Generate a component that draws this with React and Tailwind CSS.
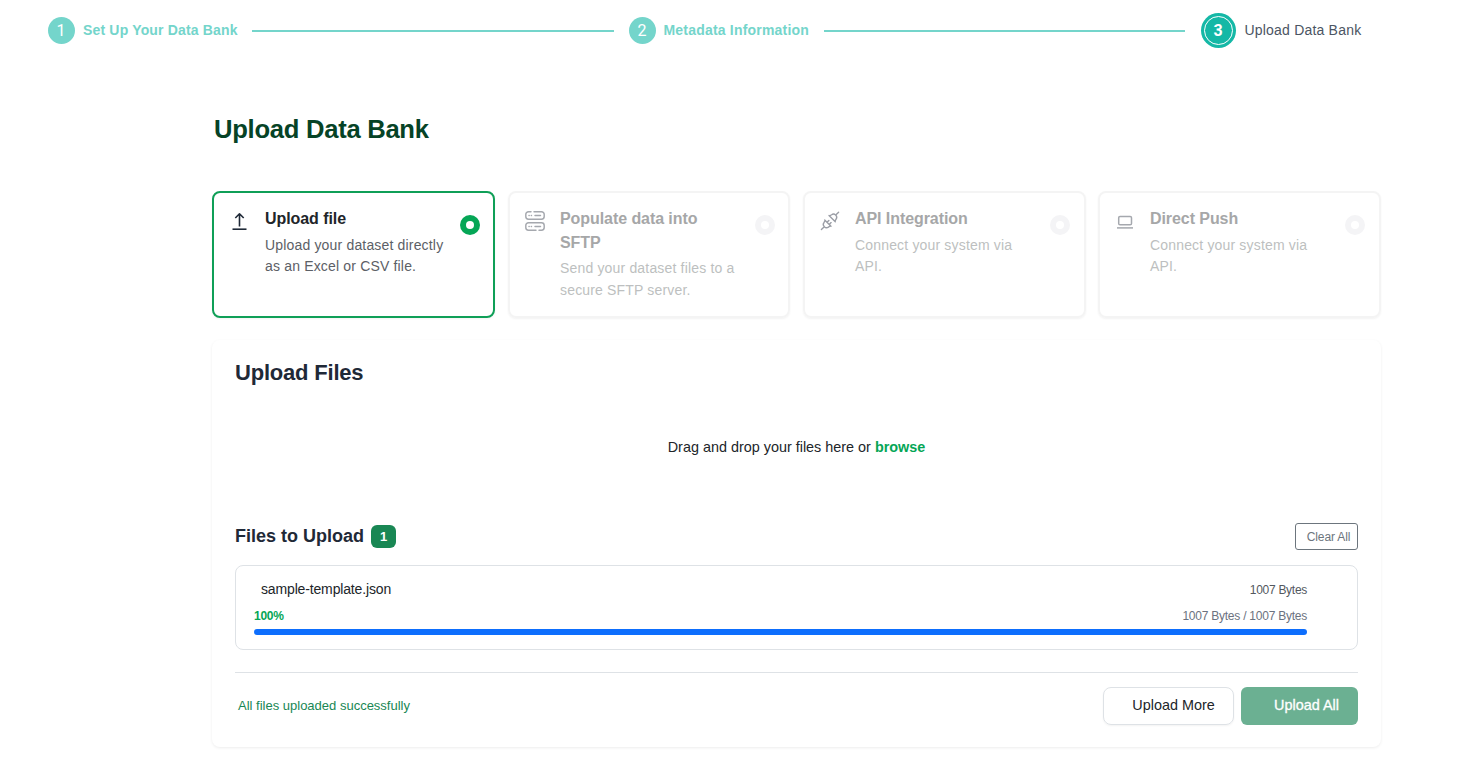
import React from "react";

function UploadIcon() {
  return (
    <svg width="20" height="20" viewBox="0 0 20 20" fill="none" stroke="#1f2937" strokeWidth="1.6">
      <path d="M10.500 15.500V3.200M6.300 7l4.200-4.200L14.700 7" strokeLinejoin="round" />
      <path d="M3.500 18.200h14" />
    </svg>
  );
}

function ServerIcon() {
  return (
    <svg width="20" height="20" viewBox="0 0 20 20" fill="none" stroke="#a5a8ae" strokeWidth="1.450" strokeLinecap="round">
      <path d="M6 .8H3.500A2.700 2.700 0 0 0 .8 3.500v2A2.700 2.700 0 0 0 3.500 8.200h13a2.700 2.700 0 0 0 2.700-2.700v-2A2.700 2.700 0 0 0 16.500 .8H9" />
      <path d="M11 19.200H3.500a2.700 2.700 0 0 1-2.700-2.700v-2a2.700 2.700 0 0 1 2.700-2.700h13a2.700 2.700 0 0 1 2.700 2.700v2a2.700 2.700 0 0 1-2.700 2.700H14" />
      <path d="M4 4.500h.2M6.300 4.500h.2M10 4.500h5.500M4 15.500h.2M6.300 15.500h.2M10 15.500h5.500" />
    </svg>
  );
}

function PlugIcon() {
  return (
    <svg width="20" height="20" viewBox="0 0 20 20" fill="none" stroke="#9a9da5" strokeWidth="1.350" strokeLinecap="round" strokeLinejoin="round">
      <path d="M4.700 9l6.300 6.300M5.200 9.500L3.900 11.600a3.200 3.200 0 0 0 .4 4.100a3.200 3.200 0 0 0 4.100.4l2.100-1.300M3.500 16.500L1.400 18.600M7.500 10.800l1.400-1.400M9.700 13l1.400-1.400" />
      <path d="M9 4.700l6.300 6.300M9.500 5.200l2.100-1.300a3.200 3.200 0 0 1 4.100.4a3.200 3.200 0 0 1 .4 4.100l-1.300 2.100M16.500 3.500L18.600 1.400" transform="translate(0 -.2)" />
    </svg>
  );
}

function LaptopIcon() {
  return (
    <svg width="20" height="20" viewBox="0 0 20 20" fill="none" stroke="#a5a8ae" strokeWidth="1.500">
      <rect x="3.700" y="5.400" width="12.800" height="8.400" rx="1.300" />
      <path d="M2 16.900h16" />
    </svg>
  );
}

function DoneStep({ number, label, labelClass }) {
  return (
    <div className="flex items-center">
      <span className="flex h-[27px] w-[27px] items-center justify-center rounded-full bg-[#74d5cb] font-['Roboto','Liberation_Sans',sans-serif] text-base text-white">
        {number}
      </span>
      <span className={`mb-px whitespace-nowrap font-bold text-[#74d5cb] ${labelClass}`}>{label}</span>
    </div>
  );
}

function MethodCard({ icon, title, text, active, className = "" }) {
  return (
    <div
      className={`flex h-[127px] rounded-lg border-2 pt-[13px] pl-[15px] shadow-xs ${
        active ? "border-[#0f9f57]" : "border-[#f4f4f4]"
      } ${className}`}
    >
      <div className={`shrink-0 pt-[5px] ${active ? "w-9" : "w-[35px]"}`}>{icon}</div>
      <div className="w-[188px] shrink-0 pt-px">
        <h3 className={`text-base leading-[23.500px] font-bold tracking-[-0.070px] whitespace-pre-line ${active ? "text-[#212529]" : "text-[#a6a7a8]"}`}>
          {title}
        </h3>
        <p className={`mt-[4.400px] text-sm leading-[21.400px] tracking-[0.170px] whitespace-pre-line ${active ? "text-[#5c6066]" : "text-[#bdbfc0]"}`}>
          {text}
        </p>
      </div>
      <span
        className={`mt-[9px] ml-[7px] flex h-5 w-5 shrink-0 items-center justify-center rounded-full ${
          active ? "bg-[#05a656]" : "bg-[#f4f4f6]"
        }`}
      >
        <span className="h-2 w-2 rounded-full bg-white" />
      </span>
    </div>
  );
}

export default function App() {
  return (
    <div className="h-[767px] w-[1468px] overflow-hidden bg-white font-['Liberation_Sans',Arial,sans-serif] text-[#212529]">
      <div className="flex h-[61px] items-center pl-[47.500px]">
        <DoneStep number="1" label="Set Up Your Data Bank" labelClass="ml-[8.500px] w-[168.500px] text-sm tracking-[0.170px]" />
        <div className="mt-px h-[2px] w-[362px] bg-[#74d5cb]" />
        <div className="w-[15px]" />
        <DoneStep number="2" label="Metadata Information" labelClass="ml-2 w-[160px] text-sm tracking-[0.200px]" />
        <div className="mt-px h-[2px] w-[361px] bg-[#74d5cb]" />
        <span className="ml-4 flex h-[35px] w-[35px] items-center justify-center rounded-full bg-[#14b8a6]">
          <span className="flex h-[29px] w-[29px] items-center justify-center rounded-full border border-white font-['Roboto','Liberation_Sans',sans-serif] text-base font-bold text-white">
            3
          </span>
        </span>
        <span className="mb-px ml-[9px] text-sm tracking-[0.200px] whitespace-nowrap text-[#4b5563]">Upload Data Bank</span>
      </div>

      <main className="ml-[212px] w-[1169px]">
        <h1 className="h-[130px] pt-[53px] pl-[2px] text-[25.600px] leading-[30px] font-bold tracking-[-0.270px] text-[#064326]">Upload Data Bank</h1>

        <div className="flex">
          <MethodCard className="mr-[13px] w-[283px]" active icon={<UploadIcon />} title="Upload file" text={"Upload your dataset directly\nas an Excel or CSV file."} />
          <MethodCard className="mr-[13px] w-[282px]" icon={<ServerIcon />} title={"Populate data into\nSFTP"} text={"Send your dataset files to a\nsecure SFTP server."} />
          <MethodCard className="mr-3 w-[283px]" icon={<PlugIcon />} title="API Integration" text={"Connect your system via\nAPI."} />
          <MethodCard className="w-[283px]" icon={<LaptopIcon />} title="Direct Push" text={"Connect your system via\nAPI."} />
        </div>

        <section className="mt-[22px] h-[407px] rounded-lg px-[23px] pt-[19px] shadow-[0_1px_3px_rgba(0,0,0,0.075)]">
          <h2 className="h-[59px] text-[22px] leading-7 font-bold tracking-[-0.200px] text-[#1f2937]">Upload Files</h2>
          <p className="h-[105px] pt-[19px] text-center text-[14.400px] leading-5 text-[#212529]">
            Drag and drop your files here or <span className="font-bold text-[#05a656]">browse</span>
          </p>

          <div className="flex h-[27px] items-center justify-between">
            <div className="flex items-center gap-[7px]">
              <h3 className="mb-[2px] text-[18px] leading-6 font-bold text-[#1f2937]">Files to Upload</h3>
              <span className="flex h-[23px] w-[25px] items-center justify-center rounded-md bg-[#198754] text-[13px] font-bold text-white">1</span>
            </div>
            <button className="h-[27px] w-[63px] rounded-[3px] border border-[#6c757d] pl-1 text-xs tracking-[-0.150px] whitespace-nowrap text-[#6c757d]">
              Clear All
            </button>
          </div>

          <div className="mt-[15px] h-[85px] rounded-lg border border-[#dee2e6] pt-[13px] pr-[50px] pl-[18px]">
            <div className="flex h-5 items-center justify-between">
              <span className="pl-[7px] text-sm tracking-[-0.150px] text-[#212529]">sample-template.json</span>
              <span className="pt-px text-xs tracking-[-0.280px] text-[#53585e]">1007 Bytes</span>
            </div>
            <div className="mt-2 flex h-[18px] items-center justify-between text-xs tracking-[-0.240px]">
              <span className="font-bold text-[#05a656]">100%</span>
              <span className="text-[#6b7280]">1007 Bytes / 1007 Bytes</span>
            </div>
            <div className="mt-1 h-1.5 rounded-full bg-[#0d6efd]" />
          </div>

          <div className="mt-[22px] flex items-center justify-between border-t border-[#dee2e6] pt-[14px]">
            <span className="pl-[3px] text-[13px] text-[#198754]">All files uploaded successfully</span>
            <div className="flex gap-[7px] text-[14.400px]">
              <button className="h-[38px] w-[131px] rounded-lg border border-[#dee2e6] pb-[2px] pl-[10px] leading-5 whitespace-nowrap shadow-xs">Upload More</button>
              <button className="h-[38px] w-[117px] rounded-md bg-[#6bb092] pb-[2px] pl-[14px] leading-5 whitespace-nowrap text-white [-webkit-text-stroke:0.300px_white]">Upload All</button>
            </div>
          </div>
        </section>
      </main>
    </div>
  );
}
